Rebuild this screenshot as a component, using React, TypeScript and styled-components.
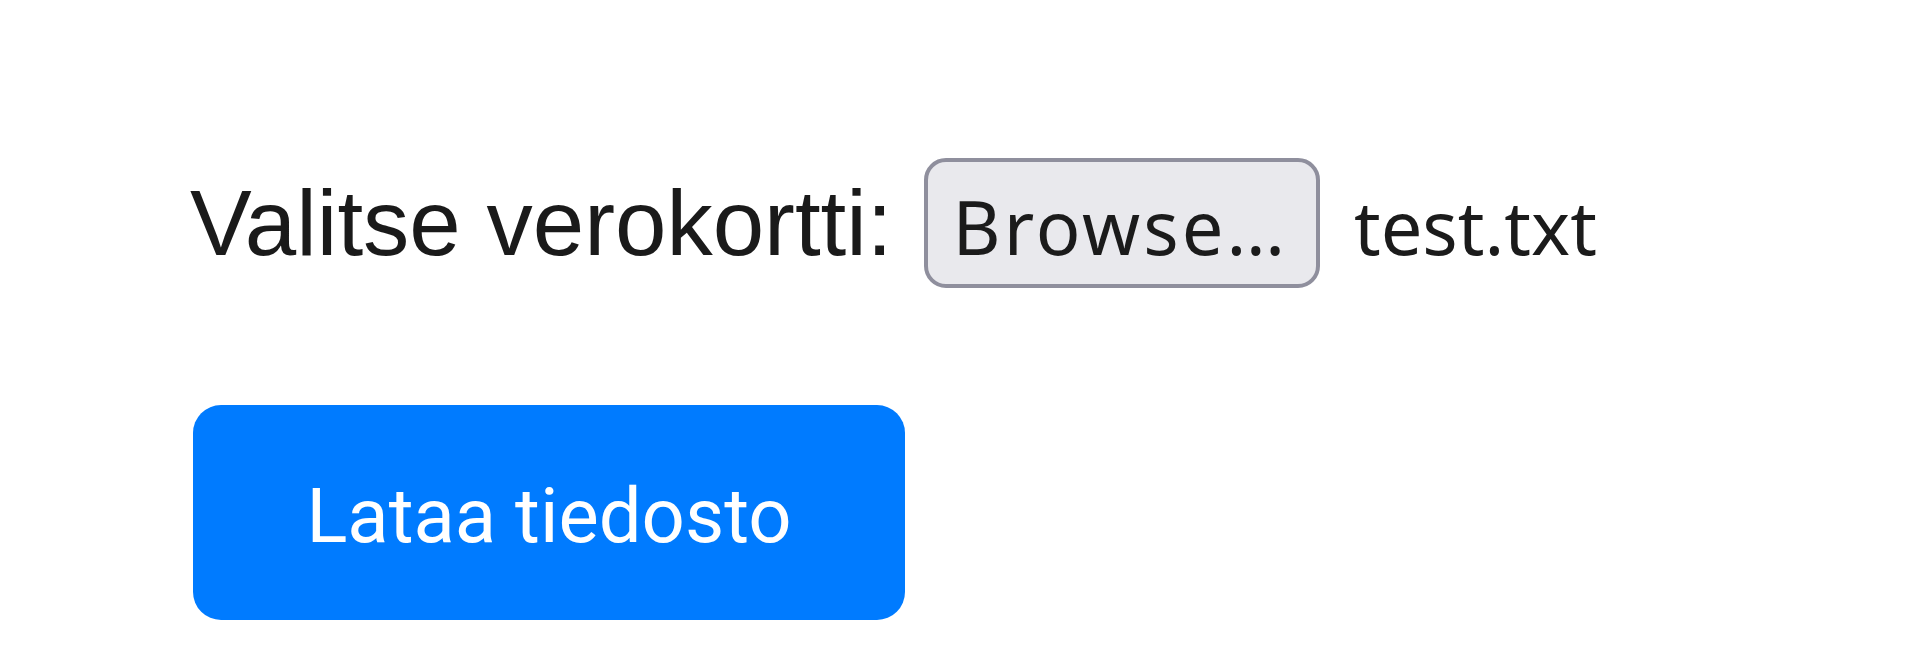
import React from "react";
import styled, { createGlobalStyle } from "styled-components";

const Global = createGlobalStyle`
  html, body { margin: 0; padding: 0; background: #ffffff; }
  body { font-family: "Liberation Sans", Arial, sans-serif; color: #1a1a1a; }
`;

const Page = styled.form`
  display: flex;
  flex-direction: column;
  align-items: flex-start;
  padding: 158px 0 0 190px;
`;

const Row = styled.div`
  display: flex;
  align-items: baseline;
`;

const Label = styled.label`
  font-family: "Liberation Sans", Arial, sans-serif;
  font-size: 92.5px;
  line-height: normal;
  color: #1a1a1a;
  margin-right: 31px;
`;

const BrowseButton = styled.button`
  box-sizing: border-box;
  height: 130px;
  font-family: "Noto Sans", sans-serif;
  font-size: 74px;
  line-height: 81px;
  letter-spacing: 3px;
  padding: 24px 28px 17px 25px;
  background: #e9e9ed;
  border: 4px solid #8f8f9d;
  border-radius: 22px;
  color: #1b1b1b;
  margin-right: 34px;
`;

const FileName = styled.span`
  font-family: "Noto Sans", sans-serif;
  font-size: 74px;
  color: #1b1b1b;
`;

const SubmitButton = styled.button`
  box-sizing: border-box;
  width: 712px;
  height: 215px;
  margin: 117px 0 0 3px;
  background: #007bff;
  border: none;
  border-radius: 28px;
  color: #ffffff;
  font-family: Roboto, "Noto Sans", sans-serif;
  font-size: 76px;
  font-weight: 400;
  display: flex;
  align-items: center;
  justify-content: center;
  padding: 6px 0 0 0;
`;

export default function App() {
  return (
    <>
      <Global />
      <Page onSubmit={(e) => e.preventDefault()}>
        <Row>
          <Label htmlFor="file">Valitse verokortti:</Label>
          <BrowseButton type="button" id="file">Browse…</BrowseButton>
          <FileName>test.txt</FileName>
        </Row>
        <SubmitButton type="submit">Lataa tiedosto</SubmitButton>
      </Page>
    </>
  );
}
